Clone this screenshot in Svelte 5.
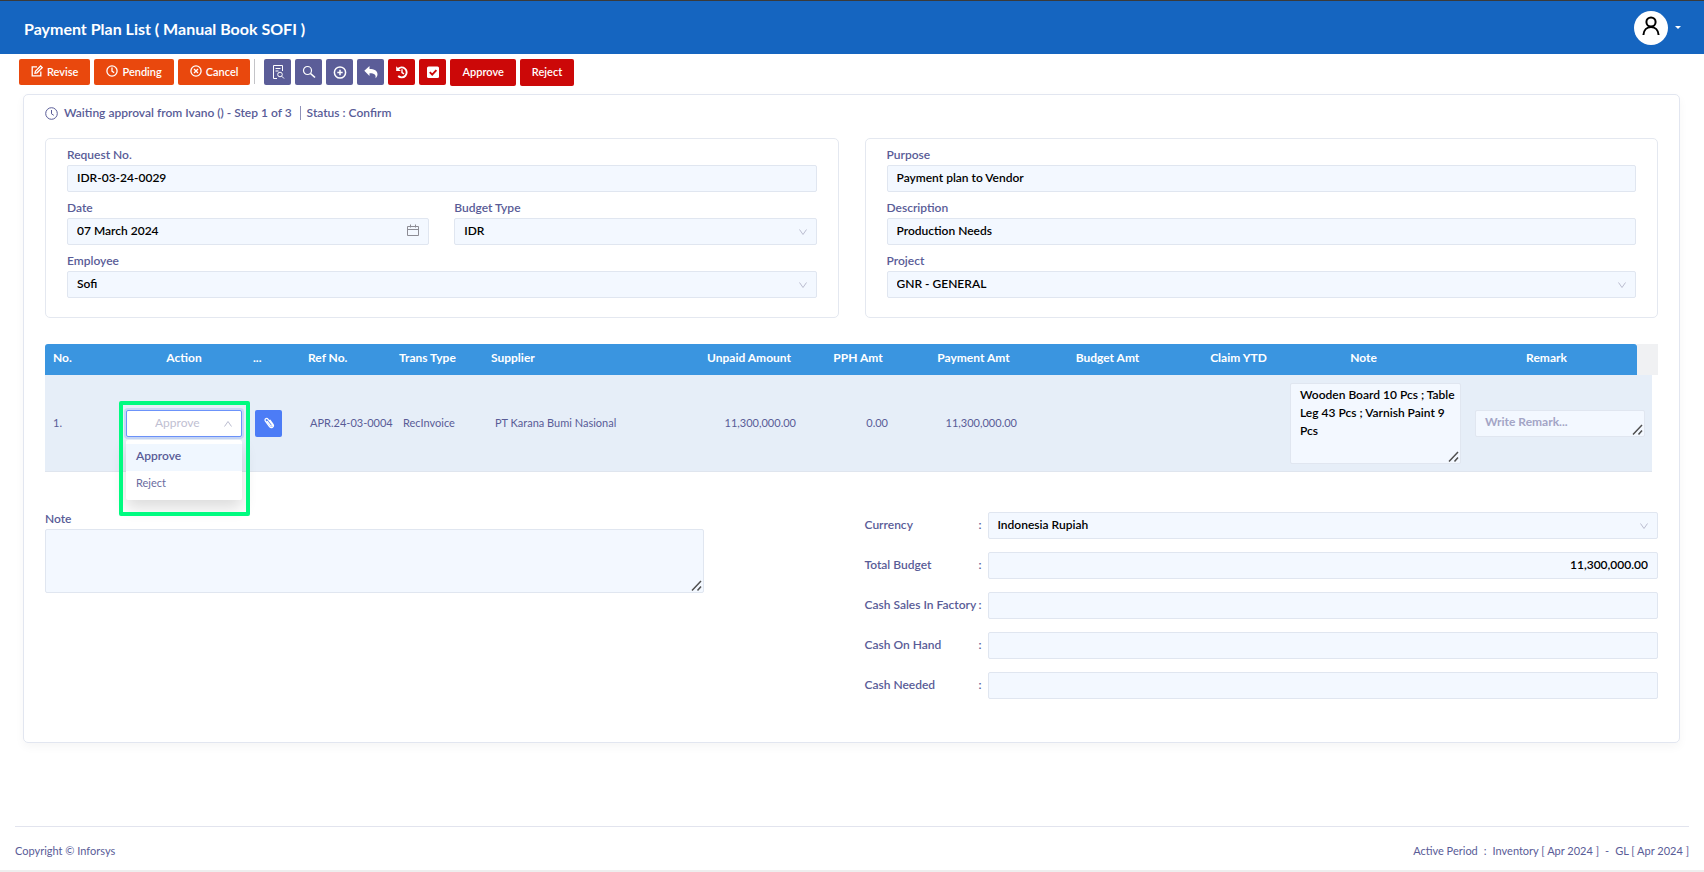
<script>
	let request = $state({
		no: 'IDR-03-24-0029',
		date: '07 March 2024',
		budgetType: 'IDR',
		employee: 'Sofi',
		purpose: 'Payment plan to Vendor',
		description: 'Production Needs',
		project: 'GNR - GENERAL',
		note: ''
	});

	let rows = $state([
		{
			action: 'Approve',
			ref: 'APR.24-03-0004',
			type: 'RecInvoice',
			supplier: 'PT Karana Bumi Nasional',
			unpaid: '11,300,000.00',
			pph: '0.00',
			payment: '11,300,000.00',
			note: 'Wooden Board 10 Pcs ; Table Leg 43 Pcs ; Varnish Paint 9 Pcs',
			remark: ''
		}
	]);

	let totals = $state([
		{ id: 'total-budget', label: 'Total Budget', value: '11,300,000.00' },
		{ id: 'cash-sales', label: 'Cash Sales In Factory', value: '' },
		{ id: 'cash-on-hand', label: 'Cash On Hand', value: '' },
		{ id: 'cash-needed', label: 'Cash Needed', value: '' }
	]);

	const actions = ['Approve', 'Reject'];
	let menuOpen = $state(true);

	function choose(row, action) {
		row.action = action;
		menuOpen = false;
	}
</script>

{#snippet chevron()}
	<svg class="chevron" viewBox="0 0 10 10" width="10" height="10" aria-hidden="true">
		<path d="M1.5 2.5 5 7.5 8.5 2.5" fill="none" stroke="currentColor" />
	</svg>
{/snippet}

<div class="app">
	<header class="topbar">
		<h1>Payment Plan List ( Manual Book SOFI )</h1>
		<button class="user" aria-label="Account">
			<span class="avatar">
				<svg viewBox="0 0 20 20" width="20" height="20" fill="none" stroke="#000" stroke-width="2">
					<circle cx="10" cy="6" r="4.6" />
					<path d="M2.4 19c.3-4.8 3.4-8 7.6-8s7.3 3.2 7.6 8" />
				</svg>
			</span>
			<span class="caret"></span>
		</button>
	</header>

	<nav class="toolbar">
		<button class="btn orange">
			<svg viewBox="0 0 12 12" width="12" height="12" fill="none" stroke="currentColor" stroke-width="1.3">
				<path d="M6 1.8H1.2v9h8.6V6.5" />
				<path d="M4 8.2l.4-2L9.6 1l1.6 1.6L6 7.8z" />
			</svg>
			Revise
		</button>
		<button class="btn orange">
			<svg viewBox="0 0 12 12" width="12" height="12" fill="none" stroke="currentColor" stroke-width="1.3">
				<circle cx="6" cy="6" r="5.1" />
				<path d="M6 2.5V6.2l2.2 1.4" />
			</svg>
			Pending
		</button>
		<button class="btn orange">
			<svg viewBox="0 0 12 12" width="12" height="12" fill="none" stroke="currentColor" stroke-width="1.3">
				<circle cx="6" cy="6" r="5.1" />
				<path d="M4 4l4 4M8 4L4 8" />
			</svg>
			Cancel
		</button>
		<span class="divider"></span>
		<button class="btn icon purple" aria-label="Preview">
			<svg viewBox="0 0 14 14" width="14" height="14" fill="none" stroke="currentColor">
				<path d="M11.5 6V.5h-9v13H6M4.500 3.500h5M4.500 6h3" />
				<circle cx="9" cy="9.5" r="2.3" />
				<path d="M10.700 11.200L13 13.500" />
			</svg>
		</button>
		<button class="btn icon purple" aria-label="Search">
			<svg viewBox="0 0 14 14" width="14" height="14" fill="none" stroke="currentColor" stroke-width="1.2">
				<circle cx="5.5" cy="5.5" r="4" />
				<path d="M8.500 8.500L13 12.500" stroke-width="1.6" />
			</svg>
		</button>
		<button class="btn icon purple" aria-label="Add">
			<svg viewBox="0 0 14 14" width="14" height="14" fill="none" stroke="currentColor" stroke-width="1.5">
				<circle cx="7" cy="7.5" r="5.6" />
				<path d="M7 4.800v5.400M4.300 7.500h5.400" />
			</svg>
		</button>
		<button class="btn icon purple" aria-label="Back">
			<svg viewBox="0 0 14 14" width="14" height="14" fill="currentColor">
				<path d="M.3 5.800L5.500 1v2.900c4.800 0 8 1.600 8 5.400 0 1.700-.9 3-2 3.900.7-3.300-.8-5-6-5v2.700z" />
			</svg>
		</button>
		<button class="btn icon red" aria-label="History">
			<svg viewBox="0 0 14 14" width="14" height="14" fill="none" stroke="currentColor" stroke-width="1.9">
				<path d="M2.800 4.200A5 5 0 1 1 3.200 11" />
				<path d="M7 4.300v3.200l2 1.300" stroke-width="1.4" />
				<path d="M1.200 1.300v4.700h4.700z" fill="currentColor" stroke="none" />
			</svg>
		</button>
		<button class="btn icon red" aria-label="Check">
			<svg viewBox="0 0 14 14" width="14" height="14">
				<rect x="1" y="1.5" width="12" height="11.5" rx="1.5" fill="#fff" />
				<path d="M3.800 7.200l2.400 2.400 4.200-4.400" fill="none" stroke="#cc0808" stroke-width="1.9" />
			</svg>
		</button>
		<button class="btn red wide">Approve</button>
		<button class="btn red wide">Reject</button>
	</nav>

	<main class="card">
		<p class="status">
			<svg viewBox="0 0 13 13" width="13" height="13" fill="none" stroke="currentColor">
				<circle cx="6.5" cy="6.5" r="5.8" />
				<path d="M6.500 3v3.800l2.300 1.500" />
			</svg>
			<span>Waiting approval from Ivano () - Step 1 of 3</span>
			<span class="bar"></span>
			<span>Status : Confirm</span>
		</p>

		<div class="panels">
			<section class="panel">
				<div class="field">
					<label for="request-no">Request No.</label>
					<input id="request-no" class="control" bind:value={request.no} />
				</div>
				<div class="pair">
					<div class="field">
						<label for="date">Date</label>
						<div class="wrap">
							<input id="date" class="control" bind:value={request.date} />
							<svg class="calendar" viewBox="0 0 12 12" width="12" height="12" fill="none" stroke="#8c8c94">
								<path d="M.5 2.500h11v9H.5zM.5 5.500h11M3.500 .5v3M8.500 .5v3" />
							</svg>
						</div>
					</div>
					<div class="field">
						<label for="budget-type">Budget Type</label>
						<div class="wrap">
							<select id="budget-type" class="control" bind:value={request.budgetType}>
								<option>IDR</option>
							</select>
							{@render chevron()}
						</div>
					</div>
				</div>
				<div class="field">
					<label for="employee">Employee</label>
					<div class="wrap">
						<select id="employee" class="control" bind:value={request.employee}>
							<option>Sofi</option>
						</select>
						{@render chevron()}
					</div>
				</div>
			</section>

			<section class="panel">
				<div class="field">
					<label for="purpose">Purpose</label>
					<input id="purpose" class="control" bind:value={request.purpose} />
				</div>
				<div class="field">
					<label for="description">Description</label>
					<input id="description" class="control" bind:value={request.description} />
				</div>
				<div class="field">
					<label for="project">Project</label>
					<div class="wrap">
						<select id="project" class="control" bind:value={request.project}>
							<option>GNR - GENERAL</option>
						</select>
						{@render chevron()}
					</div>
				</div>
			</section>
		</div>

		<table>
			<colgroup>
				<col class="c-no" />
				<col class="c-action" />
				<col class="c-file" />
				<col class="c-ref" />
				<col class="c-type" />
				<col />
				<col class="c-unpaid" />
				<col class="c-pph" />
				<col class="c-payment" />
				<col class="c-budget" />
				<col class="c-claim" />
				<col class="c-note" />
				<col class="c-remark" />
				<col class="c-scroll" />
				<col class="c-edge" />
			</colgroup>
			<thead>
				<tr>
					<th class="left first">No.</th>
					<th>Action</th>
					<th class="dots">...</th>
					<th class="left">Ref No.</th>
					<th class="left">Trans Type</th>
					<th class="left">Supplier</th>
					<th>Unpaid Amount</th>
					<th>PPH Amt</th>
					<th>Payment Amt</th>
					<th>Budget Amt</th>
					<th class="claim">Claim YTD</th>
					<th class="note">Note</th>
					<th class="remark">Remark</th>
					<td class="gutter" colspan="2"></td>
				</tr>
			</thead>
			<tbody>
				{#each rows as row, i}
					<tr>
						<td class="first">{i + 1}.</td>
						<td class="cell">
							<div class="action">
								<select aria-label="Action" bind:value={row.action}>
									{#each actions as action}
										<option>{action}</option>
									{/each}
								</select>
								{@render chevron()}
								{#if menuOpen}
									<div class="frame"></div>
									<div class="menu">
										{#each actions as action}
											<button class:selected={action === row.action} onclick={() => choose(row, action)}>
												{action}
											</button>
										{/each}
									</div>
								{/if}
							</div>
						</td>
						<td class="file">
							<button class="attach" aria-label="Attachment">
								<svg viewBox="0 0 12 12" width="12" height="12" fill="none" stroke="#fff" stroke-width="1.2" stroke-linecap="round">
									<path d="M4.200 4.300l3.300 4.300c.9 1.100 2.300 0 1.500-1.100L5.100 2.300C3.600.4 1 2.300 2.400 4.200l4.100 5.400c1.900 2.400 5.200 0 3.400-2.500L7 3.200" />
								</svg>
							</button>
						</td>
						<td>{row.ref}</td>
						<td class="text">{row.type}</td>
						<td class="text">{row.supplier}</td>
						<td class="num">{row.unpaid}</td>
						<td class="num pph">{row.pph}</td>
						<td class="num payment">{row.payment}</td>
						<td></td>
						<td></td>
						<td class="cell">
							<textarea class="control tall" aria-label="Note" bind:value={row.note}></textarea>
						</td>
						<td class="cell" colspan="2">
							<textarea class="control" aria-label="Remark" placeholder="Write Remark..." bind:value={row.remark}></textarea>
						</td>
					</tr>
				{/each}
			</tbody>
		</table>

		<div class="bottom">
			<div class="field memo">
				<label for="note">Note</label>
				<textarea id="note" class="control" bind:value={request.note}></textarea>
			</div>
			<div class="totals">
				<div class="total">
					<label for="currency">Currency</label>
					<span>:</span>
					<div class="wrap">
						<select id="currency" class="control">
							<option>Indonesia Rupiah</option>
						</select>
						{@render chevron()}
					</div>
				</div>
				{#each totals as total}
					<div class="total">
						<label for={total.id}>{total.label}</label>
						<span>:</span>
						<input id={total.id} class="control amount" bind:value={total.value} />
					</div>
				{/each}
			</div>
		</div>
	</main>

	<footer>
		<span>Copyright © Inforsys</span>
		<span class="period">
			<span>Active Period</span><span>:</span><span>Inventory [ Apr 2024 ]</span><span>-</span><span>GL [ Apr 2024 ]</span>
		</span>
	</footer>
</div>

<style>
	:global(body) {
		margin: 0;
		background: #fff;
	}

	.app,
	.app :global(*) {
		box-sizing: border-box;
	}

	.app {
		min-height: 100vh;
		display: flex;
		flex-direction: column;
		border-top: 1px solid #3a3a3a;
		border-bottom: 2px solid #eee;
		font-family: Lato, 'Noto Sans', sans-serif;
		font-size: 12px;
		color: #595c97;
	}

	button,
	input,
	select,
	textarea {
		font: inherit;
		margin: 0;
	}

	button {
		border: 0;
		cursor: pointer;
	}

	svg {
		display: block;
		flex: none;
	}

	.topbar {
		display: flex;
		align-items: center;
		justify-content: space-between;
		height: 53px;
		padding: 0 23px 0 24px;
		background: #1565c0;
		color: #fff;
	}

	h1 {
		margin: 0;
		padding-top: 2px;
		font-size: 16px;
		line-height: 20px;
		font-weight: 700;
	}

	.user {
		display: flex;
		align-items: center;
		gap: 7px;
		padding: 0;
		background: none;
	}

	.avatar {
		display: flex;
		justify-content: center;
		width: 34px;
		height: 34px;
		padding-top: 5px;
		border-radius: 50%;
		background: #fff;
	}

	.caret {
		border: 3px solid transparent;
		border-top-color: #fff;
		border-bottom: 0;
	}

	.toolbar {
		display: flex;
		gap: 4px;
		padding: 5px 19px 0;
	}

	.btn {
		display: flex;
		align-items: center;
		justify-content: center;
		gap: 4px;
		height: 26px;
		padding: 0 12px 2px;
		border-radius: 2px;
		color: #fff;
		font-size: 11px;
		font-weight: 600;
	}

	.btn.icon {
		width: 27px;
		padding: 0;
	}

	.btn.wide {
		height: 27px;
	}

	.orange {
		background: #e9480d;
	}

	.purple {
		background: #5b5d98;
	}

	.red {
		background: #cc0808;
	}

	.divider {
		width: 1px;
		height: 25px;
		margin-right: 5px;
		background: #c4c4c8;
	}

	.card {
		margin: 8px 24px 0 23px;
		padding: 8px 21px 43px;
		border: 1px solid #e2e6f0;
		border-radius: 5px;
		box-shadow: 0 4px 10px rgba(0, 0, 0, 0.04);
	}

	.status {
		display: flex;
		align-items: center;
		gap: 6px;
		margin: 0;
		line-height: 20px;
		font-weight: 600;
	}

	.bar {
		width: 1px;
		height: 14px;
		margin-left: 2px;
		background: #8f91b8;
	}

	.panels {
		display: grid;
		grid-template-columns: 1fr 1fr;
		gap: 26px;
		margin-top: 15px;
	}

	.panel {
		display: flex;
		flex-direction: column;
		gap: 5px;
		padding: 5px 21px 19px;
		border: 1px solid #e4e8f0;
		border-radius: 5px;
	}

	.pair {
		display: grid;
		grid-template-columns: 1fr 1fr;
		gap: 25px;
	}

	.field label {
		display: block;
		line-height: 21px;
		font-weight: 600;
	}

	.wrap {
		position: relative;
	}

	.control {
		display: block;
		width: 100%;
		height: 27px;
		padding: 0 9px 3px;
		border: 1px solid #e0e6f0;
		border-radius: 2px;
		outline: 0;
		background: #f3f8ff;
		color: #000;
		font-weight: 600;
	}

	select {
		appearance: none;
	}

	.chevron {
		position: absolute;
		top: 9px;
		right: 9px;
		color: #bbbdd0;
	}

	.calendar {
		position: absolute;
		top: 6px;
		right: 10px;
	}

	table {
		width: 100%;
		margin-top: 26px;
		border-collapse: separate;
		border-spacing: 0;
		table-layout: fixed;
	}

	.c-no {
		width: 74px;
	}

	.c-action {
		width: 130px;
	}

	.c-file {
		width: 51px;
	}

	.c-ref {
		width: 91px;
	}

	.c-type {
		width: 92px;
	}

	.c-unpaid {
		width: 110px;
	}

	.c-pph {
		width: 108px;
	}

	.c-payment {
		width: 123px;
	}

	.c-budget {
		width: 145px;
	}

	.c-claim {
		width: 103px;
	}

	.c-note {
		width: 185px;
	}

	.c-remark {
		width: 169px;
	}

	.c-scroll {
		width: 15px;
	}

	.c-edge {
		width: 6px;
	}

	th {
		height: 31px;
		padding: 0 0 4px;
		background: #3a95e0;
		color: #fff;
		font-weight: 700;
		text-align: center;
	}

	th.left {
		padding-left: 8px;
		text-align: left;
	}

	th.first {
		border-top-left-radius: 3px;
	}

	th.dots {
		padding-left: 4px;
		text-align: left;
	}

	th.claim {
		padding-left: 14px;
	}

	th.note {
		padding-right: 24px;
	}

	th.remark {
		padding-right: 12px;
		border-top-right-radius: 3px;
	}

	.gutter {
		background: #f0f1f3;
	}

	tbody td {
		height: 97px;
		padding: 0 0 2px 10px;
		border-bottom: 1px solid #dfe5ee;
		background: #e6eef8;
		font-size: 11px;
		white-space: nowrap;
	}

	tbody td.first {
		padding-left: 8px;
	}

	tbody td.text {
		padding-left: 12px;
	}

	tbody td.num {
		padding: 0 8px 2px 0;
		text-align: right;
	}

	tbody td.pph {
		padding-right: 24px;
	}

	tbody td.payment {
		padding-right: 18px;
	}

	tbody td.cell {
		padding: 0 7px;
	}

	tbody td.file {
		padding: 0 6px;
	}

	.cell textarea,
	.memo textarea {
		padding: 2px 4px 2px 9px;
		font-size: 12px;
		line-height: 18px;
		white-space: pre-wrap;
	}

	.cell .tall {
		height: 81px;
	}

	textarea::-webkit-resizer {
		background: url("data:image/svg+xml,%3Csvg xmlns='http://www.w3.org/2000/svg' width='15' height='15'%3E%3Cpath d='M4 13.500 13 4M9.500 13.500 13 9.500' stroke='%23505050' stroke-width='1.5' fill='none'/%3E%3C/svg%3E") no-repeat right bottom;
	}

	textarea::placeholder {
		color: #a3a5c6;
		opacity: 1;
		font-weight: 700;
	}

	.action {
		position: relative;
	}

	.action select {
		display: block;
		width: 100%;
		height: 27px;
		padding: 0 30px 1px 28px;
		border: 1px solid #6c93fa;
		border-radius: 2px;
		outline: 0;
		background: #fff;
		box-shadow: 0 0 0 2px rgba(76, 124, 246, 0.2);
		color: #bfc0d2;
		font-size: 12px;
	}

	.action .chevron {
		transform: rotate(180deg);
	}

	/* marker around the open action menu */
	.frame {
		position: absolute;
		top: -9px;
		left: -7px;
		right: -8px;
		height: 115px;
		border: 4px solid #00fb80;
		border-radius: 2px;
		pointer-events: none;
		z-index: 3;
	}

	.menu {
		position: absolute;
		top: 30px;
		left: 0;
		right: 0;
		padding: 4px 0 2px;
		border-radius: 2px;
		background: #fff;
		box-shadow: 0 8px 16px rgba(0, 0, 0, 0.14);
		z-index: 2;
	}

	.menu button {
		display: block;
		width: 100%;
		height: 27px;
		padding: 0 10px 3px;
		background: none;
		color: #6a6c9f;
		text-align: left;
	}

	.menu .selected {
		background: #f0f7ff;
		color: #595c97;
		font-size: 12px;
		font-weight: 600;
	}

	.attach {
		display: flex;
		align-items: center;
		justify-content: center;
		width: 27px;
		height: 27px;
		padding: 0;
		border-radius: 2px;
		background: #4c7cf6;
	}

	.bottom {
		display: grid;
		grid-template-columns: 1fr 1fr;
		gap: 26px;
		margin-top: 36px;
	}

	.memo {
		width: 83%;
	}

	.memo textarea {
		height: 64px;
	}

	.totals {
		display: flex;
		flex-direction: column;
		gap: 13px;
		padding-top: 4px;
	}

	.total {
		display: grid;
		grid-template-columns: 114px 9px 1fr;
		align-items: center;
		font-weight: 600;
	}

	.total > label,
	.total > span {
		padding-bottom: 3px;
	}

	.amount {
		text-align: right;
	}

	footer {
		display: flex;
		justify-content: space-between;
		margin: auto 15px 0;
		padding: 14px 0 9px;
		border-top: 1px solid #e2e4ee;
		font-size: 11px;
		line-height: 20px;
	}

	.period {
		display: flex;
		gap: 6px;
	}
</style>
